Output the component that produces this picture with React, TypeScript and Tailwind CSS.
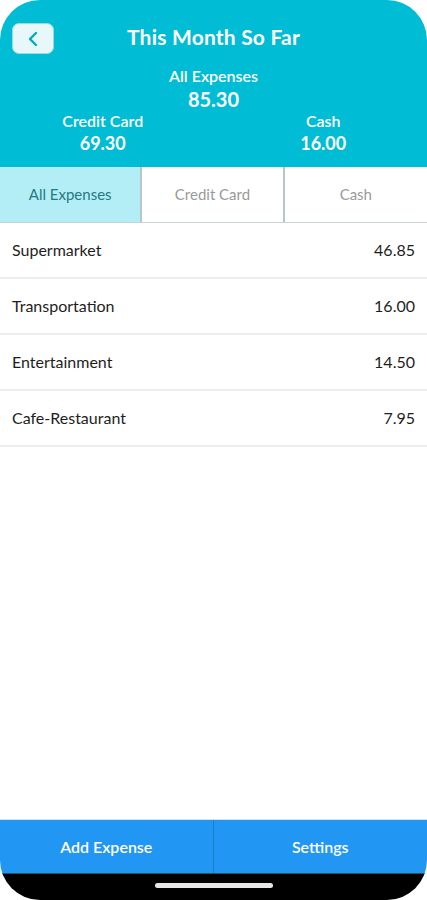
import React from 'react'

const rows = [
  { name: 'Supermarket', amount: '46.85' },
  { name: 'Transportation', amount: '16.00' },
  { name: 'Entertainment', amount: '14.50' },
  { name: 'Cafe-Restaurant', amount: '7.95' },
]

const tabs = ['All Expenses', 'Credit Card', 'Cash']

export default function App() {
  return (
    <div className="bg-white w-[427px] h-[900px]" style={{ fontFamily: 'Lato, "Noto Sans", sans-serif' }}>
      <div className="h-full flex flex-col rounded-[40px] overflow-hidden bg-white">
        {/* header */}
        <div className="bg-[#00bcd4] h-[167px] text-white flex flex-col">
          <div className="relative h-[77px] flex items-center justify-center pb-[3px]">
            <button className="absolute left-[12px] top-[23px] w-[42px] h-[31px] rounded-[7px] bg-[#e8f8fa] border border-[#9fd9e0] flex items-center justify-center">
              <svg width="14" height="16" viewBox="0 0 14 16" fill="none">
                <path d="M10 2 L4 8 L10 14" stroke="#00a9c2" strokeWidth="2.4" strokeLinecap="round" strokeLinejoin="round" />
              </svg>
            </button>
            <h1 className="text-[21px] font-bold tracking-[0.2px]">This Month So Far</h1>
          </div>
          <div className="flex flex-col items-center -mt-[9px] leading-none">
            <span className="text-[16px] font-semibold">All Expenses</span>
            <span className="text-[20px] font-bold mt-[5px]">85.30</span>
          </div>
          <div className="grid grid-cols-2 mt-[4px] leading-none">
            <div className="flex flex-col items-center pr-[8px]">
              <span className="text-[16px] font-semibold">Credit Card</span>
              <span className="text-[18px] font-bold mt-[5px]">69.30</span>
            </div>
            <div className="flex flex-col items-center pl-[6px]">
              <span className="text-[16px] font-semibold">Cash</span>
              <span className="text-[18px] font-bold mt-[5px]">16.00</span>
            </div>
          </div>
        </div>

        {/* tabs */}
        <div className="grid grid-cols-3 h-[56px] border-b border-[#c9d3d5]">
          {tabs.map((t, i) => (
            <div
              key={t}
              className={`flex items-center justify-center text-[15px] ${
                i === 0 ? 'bg-[#b3eef7] text-[#257a80]' : 'bg-white text-[#9a9a9a]'
              } ${i < 2 ? 'border-r-2 border-[#b7c6c8]' : ''}`}
            >
              {t}
            </div>
          ))}
        </div>

        {/* list */}
        <div className="flex-1 flex flex-col">
          {rows.map((r) => (
            <div key={r.name} className="h-[56px] flex items-center justify-between px-[12px] border-b-2 border-[#ececec] text-[16px] text-[#1e1e1e]">
              <span>{r.name}</span>
              <span>{r.amount}</span>
            </div>
          ))}
        </div>

        {/* bottom bar */}
        <div className="grid grid-cols-2 h-[54px] bg-[#2196f3] border-t border-[#cfe3ee] text-white text-[16px] font-semibold">
          <div className="flex items-center justify-center border-r border-[#1a80c4]">Add Expense</div>
          <div className="flex items-center justify-center">Settings</div>
        </div>
        <div className="h-[27px] bg-black border-t border-[#0e5c6e] flex items-center justify-center">
          <div className="w-[118px] h-[5px] rounded-full bg-[#e6e6e6] -mt-[3px]" />
        </div>
      </div>
    </div>
  )
}
